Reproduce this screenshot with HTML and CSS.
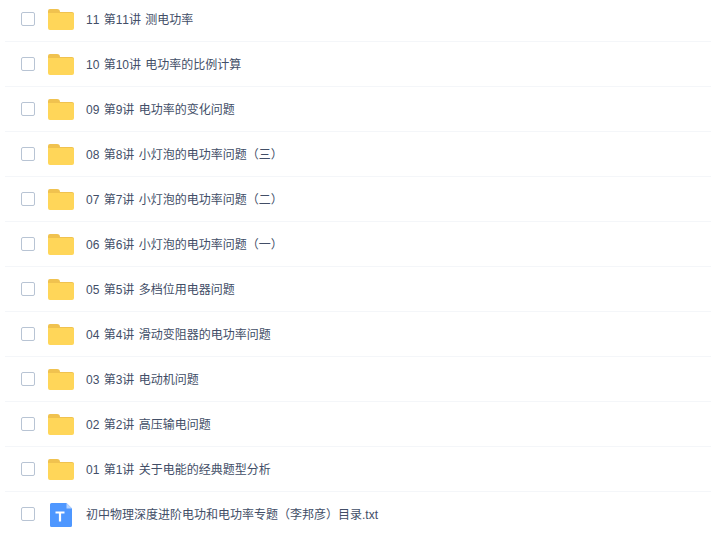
FILE: index.html
```html
<!DOCTYPE html>
<html lang="zh-CN">
<head>
    <meta charset="UTF-8">
    <title>文件列表</title>
    <link rel="stylesheet" href="styles.css">
</head>
<body>
    <svg class="icon-defs" width="0" height="0">
        <symbol id="folder" viewBox="0 0 26 21">
            <path d="M0 2a2 2 0 0 1 2-2h7a3 3 0 0 1 3 3h12a2 2 0 0 1 2 2v4H0z" fill="#f0c24f"/>
            <path d="M0 5a2 2 0 0 1 0-1h24a2 2 0 0 1 2 2v13a2 2 0 0 1-2 2H2a2 2 0 0 1-2-2z" fill="#ffd659"/>
        </symbol>
    </svg>
    <ul class="file-list">
        <li class="file-row"><span class="check"></span><svg class="folder"><use href="#folder"/></svg><span class="name">11 第11讲 测电功率</span></li>
        <li class="file-row"><span class="check"></span><svg class="folder"><use href="#folder"/></svg><span class="name">10 第10讲 电功率的比例计算</span></li>
        <li class="file-row"><span class="check"></span><svg class="folder"><use href="#folder"/></svg><span class="name">09 第9讲 电功率的变化问题</span></li>
        <li class="file-row"><span class="check"></span><svg class="folder"><use href="#folder"/></svg><span class="name">08 第8讲 小灯泡的电功率问题（三）</span></li>
        <li class="file-row"><span class="check"></span><svg class="folder"><use href="#folder"/></svg><span class="name">07 第7讲 小灯泡的电功率问题（二）</span></li>
        <li class="file-row"><span class="check"></span><svg class="folder"><use href="#folder"/></svg><span class="name">06 第6讲 小灯泡的电功率问题（一）</span></li>
        <li class="file-row"><span class="check"></span><svg class="folder"><use href="#folder"/></svg><span class="name">05 第5讲 多档位用电器问题</span></li>
        <li class="file-row"><span class="check"></span><svg class="folder"><use href="#folder"/></svg><span class="name">04 第4讲 滑动变阻器的电功率问题</span></li>
        <li class="file-row"><span class="check"></span><svg class="folder"><use href="#folder"/></svg><span class="name">03 第3讲 电动机问题</span></li>
        <li class="file-row"><span class="check"></span><svg class="folder"><use href="#folder"/></svg><span class="name">02 第2讲 高压输电问题</span></li>
        <li class="file-row"><span class="check"></span><svg class="folder"><use href="#folder"/></svg><span class="name">01 第1讲 关于电能的经典题型分析</span></li>
        <li class="file-row">
            <span class="check"></span>
            <span class="txt-icon">
                <svg width="22" height="24" viewBox="0 0 22 24">
                    <path d="M1.500 0H16.500l5.500 5.500v17a1.500 1.500 0 0 1-1.500 1.500h-19A1.500 1.500 0 0 1 0 22.500v-21A1.500 1.500 0 0 1 1.500 0z" fill="#4e97ff"/>
                    <path d="M16.500 0l5.500 5.500h-5.500z" fill="#b5d3ff"/>
                    <path d="M5.500 8.500h9v2h-3.400v8h-2.200v-8H5.500z" fill="#fff"/>
                </svg>
            </span>
            <span class="name">初中物理深度进阶电功和电功率专题（李邦彦）目录.txt</span>
        </li>
    </ul>
</body>
</html>
```

FILE: styles.css
```css
html, body {
    margin: 0;
    padding: 0;
    background-color: #fff;
    height: 536px;
    overflow: hidden;
}

.icon-defs {
    display: block;
    height: 0;
}

.file-list {
    list-style: none;
    margin: -3px 0 0 5px;
    padding: 0;
    font-family: "Liberation Sans", "Noto Sans CJK SC", sans-serif;
    font-size: 12px;
    font-kerning: none;
    word-spacing: 1px;
    color: #424e67;
}

.file-row {
    display: flex;
    align-items: center;
    height: 44px;
    border-bottom: 1px solid #f4f6f9;
    padding-left: 16px;
}

.file-row:last-child {
    border-bottom: none;
}

.check {
    box-sizing: border-box;
    width: 14px;
    height: 14px;
    border: 1px solid #b8c4d4;
    border-radius: 2px;
    margin-right: 13px;
}

.folder {
    display: block;
    width: 26px;
    height: 21px;
    margin-right: 12px;
}

.txt-icon {
    display: flex;
    justify-content: center;
    width: 26px;
    margin-right: 12px;
    padding-top: 2px;
}

.name {
    white-space: nowrap;
    padding-bottom: 1px;
}
```
